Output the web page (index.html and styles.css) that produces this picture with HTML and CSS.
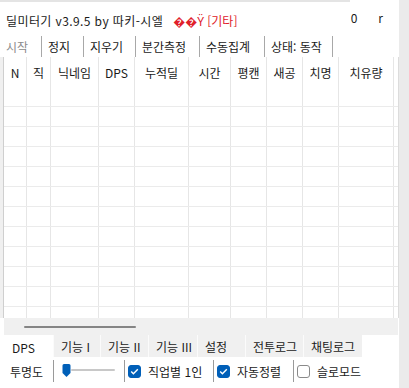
FILE: index.html
```html
<!DOCTYPE html>
<html lang="ko">
<head>
  <meta charset="UTF-8">
  <title>딜미터기</title>
  <link rel="stylesheet" href="styles.css">
</head>
<body>
  <div class="app">
    <div class="main">
      <div class="topline"></div>

      <div class="titlebar">
        <span class="title">딜미터기 v3.9.5 by 따키-시엘</span>
        <span class="notice">��Ÿ [기타]</span>
        <span class="counter">0</span>
        <span class="flag">r</span>
      </div>

      <div class="toolbar">
        <span class="tool disabled">시작</span>
        <span class="tool">정지</span>
        <span class="tool">지우기</span>
        <span class="tool">분간측정</span>
        <span class="tool">수동집계</span>
        <span class="tool">상태: 동작</span>
      </div>

      <div class="meter">
        <div class="gutter"></div>
        <div class="grid">
          <div class="row head">
            <span>N</span><span>직</span><span>닉네임</span><span>DPS</span><span>누적딜</span>
            <span>시간</span><span>평캔</span><span>새공</span><span>치명</span><span>치유량</span><span></span>
          </div>
          <div class="row"><span></span><span></span><span></span><span></span><span></span><span></span><span></span><span></span><span></span><span></span><span></span></div>
          <div class="row"><span></span><span></span><span></span><span></span><span></span><span></span><span></span><span></span><span></span><span></span><span></span></div>
          <div class="row"><span></span><span></span><span></span><span></span><span></span><span></span><span></span><span></span><span></span><span></span><span></span></div>
          <div class="row"><span></span><span></span><span></span><span></span><span></span><span></span><span></span><span></span><span></span><span></span><span></span></div>
          <div class="row"><span></span><span></span><span></span><span></span><span></span><span></span><span></span><span></span><span></span><span></span><span></span></div>
          <div class="row"><span></span><span></span><span></span><span></span><span></span><span></span><span></span><span></span><span></span><span></span><span></span></div>
          <div class="row"><span></span><span></span><span></span><span></span><span></span><span></span><span></span><span></span><span></span><span></span><span></span></div>
          <div class="row"><span></span><span></span><span></span><span></span><span></span><span></span><span></span><span></span><span></span><span></span><span></span></div>
          <div class="row"><span></span><span></span><span></span><span></span><span></span><span></span><span></span><span></span><span></span><span></span><span></span></div>
          <div class="row"><span></span><span></span><span></span><span></span><span></span><span></span><span></span><span></span><span></span><span></span><span></span></div>
          <div class="row"><span></span><span></span><span></span><span></span><span></span><span></span><span></span><span></span><span></span><span></span><span></span></div>
          <div class="row"><span></span><span></span><span></span><span></span><span></span><span></span><span></span><span></span><span></span><span></span><span></span></div>
          <div class="row"><span></span><span></span><span></span><span></span><span></span><span></span><span></span><span></span><span></span><span></span><span></span></div>
        </div>
      </div>

      <div class="hscroll"><div class="thumb"></div></div>

      <div class="tabs">
        <span class="tab active">DPS</span>
        <span class="tab">기능 I</span>
        <span class="tab">기능 II</span>
        <span class="tab">기능 III</span>
        <span class="tab">설정</span>
        <span class="tab">전투로그</span>
        <span class="tab">채팅로그</span>
      </div>

      <div class="options">
        <span class="opt">투명도</span>
        <span class="opt">
          <svg class="slider" width="54" height="14" viewBox="0 0 54 14">
            <rect x="9" y="5" width="44" height="2" rx="1" fill="#c8c8c8"/>
            <path d="M2 0h5a1.5 1.5 0 0 1 1.5 1.5V9L4.5 13 0.5 9V1.5A1.5 1.5 0 0 1 2 0z" fill="#005fb8"/>
          </svg>
        </span>
        <span class="opt"><i class="check on"></i>직업별 1인</span>
        <span class="opt"><i class="check on"></i>자동정렬</span>
        <span class="opt"><i class="check"></i>슬로모드</span>
      </div>
    </div>
    <div class="side"></div>
  </div>
</body>
</html>
```

FILE: styles.css
```css
body {
  margin: 0;
  background: white;
  font-family: "Noto Sans CJK KR", "Noto Sans", sans-serif;
  font-size: 12px;
  color: #1a1a1a;
}

.app {
  display: flex;
  width: 409px;
  height: 388px;
  overflow: hidden;
}

.main {
  width: 399px;
  background: white;
}

.side {
  flex: 1;
  background: #ebebeb;
}

.topline {
  width: 350px;
  height: 2px;
  background: #e4e4e4;
}

/* title line */
.titlebar {
  display: flex;
  align-items: center;
  height: 34px;
  padding: 3px 0 0 6px;
  box-sizing: border-box;
  line-height: 14px;
}

.title {
  letter-spacing: 0.4px;
}

.notice {
  color: #e0202a;
  margin-left: 10px;
}

.counter {
  margin-left: auto;
  margin-bottom: 5px;
}

.flag {
  margin: 0 16px 5px 21px;
}

/* buttons */
.toolbar {
  display: grid;
  grid-template-columns: 42px 42px 52px 64px 65px 68px;
  height: 21px;
}

.tool {
  display: flex;
  align-items: center;
  padding-left: 6px;
  border-right: 1px solid #a8a8a8;
  white-space: nowrap;
}

.tool.disabled {
  color: #8c8c8c;
}

/* grid */
.meter {
  display: flex;
  height: 261px;
  overflow: hidden;
}

.gutter {
  width: 3px;
  background: #f0f0f0;
  border-right: 1px solid #cfcfcf;
}

.grid {
  width: 394px;
  border-right: 1px solid #dcdcdc;
}

.row {
  display: grid;
  grid-template-columns: 23px 24px 48px 36px 54px 42px 36px 36px 36px 55px 3px;
  height: 19px;
  border-bottom: 1px solid #ebebeb;
}

.row span {
  border-right: 1px solid #e6e6e6;
  display: flex;
  align-items: center;
  justify-content: center;
  overflow: hidden;
  white-space: nowrap;
}

.row span:last-child {
  border-right: none;
}

.row.head {
  height: 30px;
  border-bottom: none;
}

/* scrollbar */
.hscroll {
  height: 17px;
  margin-left: 4px;
  width: 394px;
  background: #f0f0f0;
  display: flex;
  align-items: center;
}

.thumb {
  width: 112px;
  height: 2px;
  margin-left: 20px;
  border-radius: 1px;
  background: #858585;
}

/* tabs */
.tabs {
  display: grid;
  grid-template-columns: 53px 47px 48px 49px 48px 58px 59px;
  height: 22px;
}

.tab {
  display: flex;
  align-items: center;
  padding-left: 7px;
  background: #f0f0f0;
  border-left: 1px solid #fbfbfb;
  white-space: nowrap;
}

.tab.active {
  background: white;
  border-left: none;
  padding: 3px 0 0 12px;
}

/* bottom options */
.options {
  display: grid;
  grid-template-columns: 54px 71px 89px 80px 80px;
  height: 22px;
  margin-top: 3px;
}

.opt {
  display: flex;
  align-items: center;
  padding-left: 3px;
  border-right: 1px solid #9a9a9a;
  white-space: nowrap;
}

.opt:first-child {
  padding-left: 10px;
}

.opt:nth-child(2) {
  padding-left: 8px;
}

.opt:last-child {
  border-right: none;
}

.check {
  width: 13px;
  height: 13px;
  box-sizing: border-box;
  border: 1px solid #8a8a8a;
  border-radius: 3px;
  margin-right: 7px;
  background: white;
}

.check.on {
  border-color: #005fb8;
  background: #005fb8 url("data:image/svg+xml,%3Csvg xmlns='http://www.w3.org/2000/svg' width='11' height='11'%3E%3Cpolyline points='2.2,5.6 4.4,7.8 8.8,3.2' fill='none' stroke='white' stroke-width='1.4'/%3E%3C/svg%3E") center no-repeat;
}
```
